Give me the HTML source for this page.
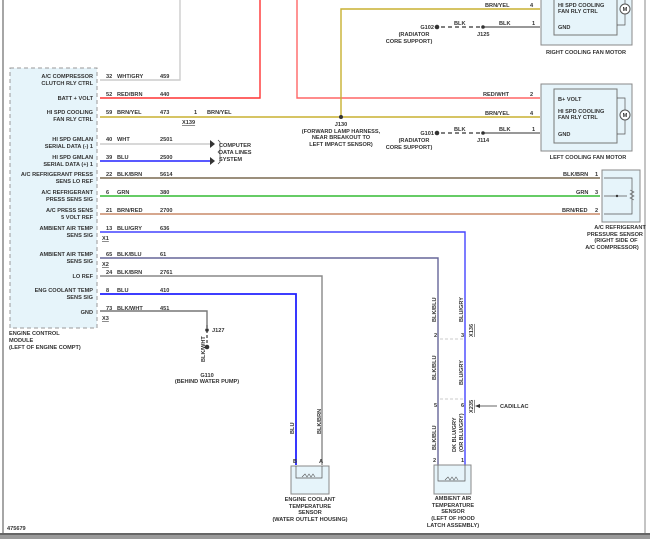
<!DOCTYPE html>
<html><head><meta charset="utf-8"><style>
html,body{margin:0;padding:0;background:#fff;width:650px;height:539px;overflow:hidden}
svg{display:block}
text{font-family:"Liberation Sans",sans-serif;font-size:5.6px;font-weight:bold;fill:#333}
.r{text-anchor:end}.m{text-anchor:middle}
</style></head><body>
<svg width="650" height="539" viewBox="0 0 650 539">
<rect x="0" y="0" width="650" height="539" fill="#fff"/>
<line x1="3" y1="0" x2="3" y2="533" stroke="#888" stroke-width="1.5"/>
<line x1="645" y1="0" x2="645" y2="533" stroke="#888" stroke-width="1"/>
<rect x="0" y="533" width="650" height="6" fill="#9a9a9a"/>
<rect x="0" y="533" width="650" height="2" fill="#666"/>
<!-- ECM -->
<rect x="10" y="68" width="87" height="260" fill="#e6f4fa" stroke="#999" stroke-dasharray="4,3"/>
<g fill="#333">
<text x="93" y="78" class="r">A/C COMPRESSOR</text><text x="93" y="85" class="r">CLUTCH RLY CTRL</text>
<text x="93" y="100" class="r">BATT + VOLT</text>
<text x="93" y="114" class="r">HI SPD COOLING</text><text x="93" y="121" class="r">FAN RLY CTRL</text>
<text x="93" y="141" class="r">HI SPD GMLAN</text><text x="93" y="148" class="r">SERIAL DATA (-) 1</text>
<text x="93" y="159" class="r">HI SPD GMLAN</text><text x="93" y="166" class="r">SERIAL DATA (+) 1</text>
<text x="93" y="176" class="r">A/C REFRIGERANT PRESS</text><text x="93" y="183" class="r">SENS LO REF</text>
<text x="93" y="194" class="r">A/C REFRIGERANT</text><text x="93" y="201" class="r">PRESS SENS SIG</text>
<text x="93" y="212" class="r">A/C PRESS SENS</text><text x="93" y="219" class="r">5 VOLT REF</text>
<text x="93" y="230" class="r">AMBIENT AIR TEMP</text><text x="93" y="237" class="r">SENS SIG</text>
<text x="93" y="256" class="r">AMBIENT AIR TEMP</text><text x="93" y="263" class="r">SENS SIG</text>
<text x="93" y="278" class="r">LO REF</text>
<text x="93" y="292" class="r">ENG COOLANT TEMP</text><text x="93" y="299" class="r">SENS SIG</text>
<text x="93" y="314" class="r">GND</text>
<text x="9" y="335">ENGINE CONTROL</text><text x="9" y="342">MODULE</text><text x="9" y="349">(LEFT OF ENGINE COMPT)</text>
<text x="7" y="530">475679</text>
</g>
<!-- wires -->
<g fill="none" stroke-width="1.4">
<path d="M100 80H180V0" stroke="#ccc"/>
<path d="M100 98H260V0" stroke="#f33"/>
<path d="M297 0V98H540" stroke="#f66"/>
<path d="M100 117H540M341 117V9H540" stroke="#c8b030"/>
<path d="M100 144H210" stroke="#ccc"/>
<path d="M100 161H210" stroke="#22f"/>
<path d="M100 178H600" stroke="#7a6a50"/>
<path d="M100 196H600" stroke="#3b3"/>
<path d="M100 214H600" stroke="#c88a68"/>
<path d="M100 232H465V465" stroke="#44f"/>
<path d="M100 258H438V465" stroke="#669"/>
<path d="M100 276H322V465" stroke="#888"/>
<path d="M100 294H296V465" stroke="#22f" stroke-width="1.8"/>
<path d="M100 311H207V325" stroke="#777"/>
<path d="M207 325V346" stroke="#555" stroke-dasharray="3,2"/>
<path d="M483 27H540M483 133H540" stroke="#777"/>
<path d="M441 27H483M441 133H483" stroke="#555" stroke-dasharray="4,3"/>
</g>
<path d="M440 339H463M440 399H463" fill="none" stroke="#bbb" stroke-width="0.8" stroke-dasharray="3,2"/>
<g fill="#333">
<circle cx="341" cy="117" r="2"/><circle cx="483" cy="27" r="1.8"/><circle cx="483" cy="133" r="1.8"/>
<circle cx="207" cy="330" r="1.8"/><circle cx="207" cy="347" r="2.3"/>
<circle cx="437" cy="27" r="2.3"/><circle cx="437" cy="133" r="2.3"/>
<polygon points="210,140 215,144 210,148"/><polygon points="210,157 215,161 210,165"/>
<polygon points="475,406 480,404 480,408"/>
</g>
<line x1="480" y1="406" x2="497" y2="406" stroke="#333" stroke-width="0.8"/>
<path d="M218 140l2 2v8l-2 2 2 2v8l-2 2" fill="none" stroke="#333" stroke-width="0.6"/>
<!-- wire labels -->
<g>
<text x="106" y="78">32</text><text x="117" y="78">WHT/GRY</text><text x="160" y="78">459</text>
<text x="106" y="96">52</text><text x="117" y="96">RED/BRN</text><text x="160" y="96">440</text>
<text x="106" y="114">59</text><text x="117" y="114">BRN/YEL</text><text x="160" y="114">473</text>
<text x="194" y="114">1</text><text x="207" y="114">BRN/YEL</text><text x="182" y="124" text-decoration="underline">X139</text>
<text x="106" y="141">40</text><text x="117" y="141">WHT</text><text x="160" y="141">2501</text>
<text x="106" y="159">39</text><text x="117" y="159">BLU</text><text x="160" y="159">2500</text>
<text x="219" y="147">COMPUTER</text><text x="219" y="154">DATA LINES</text><text x="219" y="161">SYSTEM</text>
<text x="106" y="176">22</text><text x="117" y="176">BLK/BRN</text><text x="160" y="176">5614</text>
<text x="106" y="194">6</text><text x="117" y="194">GRN</text><text x="160" y="194">380</text>
<text x="106" y="212">21</text><text x="117" y="212">BRN/RED</text><text x="160" y="212">2700</text>
<text x="106" y="230">13</text><text x="117" y="230">BLU/GRY</text><text x="160" y="230">636</text><text x="102" y="240" text-decoration="underline">X1</text>
<text x="106" y="256">65</text><text x="117" y="256">BLK/BLU</text><text x="160" y="256">61</text><text x="102" y="266" text-decoration="underline">X2</text>
<text x="106" y="274">24</text><text x="117" y="274">BLK/BRN</text><text x="160" y="274">2761</text>
<text x="106" y="292">8</text><text x="117" y="292">BLU</text><text x="160" y="292">410</text>
<text x="106" y="310">73</text><text x="117" y="310">BLK/WHT</text><text x="160" y="310">451</text><text x="102" y="320" text-decoration="underline">X3</text>
<text x="212" y="332">J127</text>
<text x="207" y="377" class="m">G110</text><text x="207" y="383" class="m">(BEHIND WATER PUMP)</text>
<text x="341" y="126" class="m">J130</text><text x="341" y="133" class="m">(FORWARD LAMP HARNESS,</text><text x="341" y="139" class="m">NEAR BREAKOUT TO</text><text x="341" y="146" class="m">LEFT IMPACT SENSOR)</text>
<text x="485" y="7">BRN/YEL</text><text x="530" y="7">4</text>
<text x="434" y="29" class="r">G102</text><text x="414" y="36" class="m">(RADIATOR</text><text x="409" y="43" class="m">CORE SUPPORT)</text>
<text x="454" y="25">BLK</text><text x="499" y="25">BLK</text><text x="532" y="25">1</text><text x="477" y="36">J125</text>
<text x="483" y="96">RED/WHT</text><text x="530" y="96">2</text>
<text x="485" y="115">BRN/YEL</text><text x="530" y="115">4</text>
<text x="434" y="135" class="r">G101</text><text x="414" y="142" class="m">(RADIATOR</text><text x="409" y="149" class="m">CORE SUPPORT)</text>
<text x="454" y="131">BLK</text><text x="499" y="131">BLK</text><text x="532" y="131">1</text><text x="477" y="142">J114</text>
<text x="563" y="176">BLK/BRN</text><text x="595" y="176">1</text>
<text x="576" y="194">GRN</text><text x="595" y="194">3</text>
<text x="562" y="212">BRN/RED</text><text x="595" y="212">2</text>
<text x="620" y="229" class="m">A/C REFRIGERANT</text><text x="615" y="236" class="m">PRESSURE SENSOR</text><text x="616" y="242" class="m">(RIGHT SIDE OF</text><text x="612" y="249" class="m">A/C COMPRESSOR)</text>
<text x="500" y="408">CADILLAC</text>
</g>
<!-- vertical labels -->
<g>
<text transform="translate(436,322) rotate(-90)">BLK/BLU</text>
<text transform="translate(463,322) rotate(-90)">BLU/GRY</text>
<text transform="translate(473,337) rotate(-90)" text-decoration="underline">X136</text>
<text transform="translate(436,380) rotate(-90)">BLK/BLU</text>
<text transform="translate(463,385) rotate(-90)">BLU/GRY</text>
<text transform="translate(473,413) rotate(-90)" text-decoration="underline">X235</text>
<text transform="translate(436,450) rotate(-90)">BLK/BLU</text>
<text transform="translate(456,452) rotate(-90)">DK BLU/GRY</text>
<text transform="translate(463,452) rotate(-90)">(OR BLU/GRY)</text>
<text transform="translate(294,434) rotate(-90)">BLU</text>
<text transform="translate(321,434) rotate(-90)">BLK/BRN</text>
<text transform="translate(205,362) rotate(-90)">BLK/WHT</text>
</g>
<!-- fan motors -->
<rect x="541" y="-2" width="91" height="47" fill="#e6f4fa" stroke="#888"/>
<rect x="554" y="-2" width="63" height="37" fill="#e6f4fa" stroke="#777"/>
<text x="558" y="7">HI SPD COOLING</text><text x="558" y="13">FAN RLY CTRL</text><text x="558" y="29">GND</text>
<circle cx="625" cy="9" r="5" fill="#fff" stroke="#555"/><text x="625" y="11" class="m">M</text>
<path d="M617 25H625V14M625 4V0" fill="none" stroke="#555" stroke-width="0.7"/>
<text x="586" y="54" class="m">RIGHT COOLING FAN MOTOR</text>
<rect x="541" y="84" width="91" height="67" fill="#e6f4fa" stroke="#888"/>
<rect x="554" y="89" width="63" height="54" fill="#e6f4fa" stroke="#777"/>
<text x="558" y="101">B+ VOLT</text><text x="558" y="113">HI SPD COOLING</text><text x="558" y="119">FAN RLY CTRL</text><text x="558" y="136">GND</text>
<circle cx="625" cy="115" r="5" fill="#fff" stroke="#555"/><text x="625" y="117" class="m">M</text>
<path d="M617 98H625V110M625 120V134H617" fill="none" stroke="#555" stroke-width="0.7"/>
<text x="588" y="159" class="m">LEFT COOLING FAN MOTOR</text>
<!-- pressure sensor -->
<rect x="602" y="170" width="38" height="52" fill="#e6f4fa" stroke="#888"/>
<path d="M604 178H632V214H604M604 196H627" fill="none" stroke="#555" stroke-width="0.7"/>
<circle cx="617" cy="196" r="1.2" fill="#333"/>
<path d="M630 190l4 2-4 2 4 2-4 2 4 2" fill="none" stroke="#555" stroke-width="0.6"/>
<!-- coolant sensor -->
<rect x="291" y="466" width="38" height="28" fill="#e6f4fa" stroke="#888"/>
<path d="M296 466V478H322V466" fill="none" stroke="#555" stroke-width="0.7"/>
<path d="M302 477l3-3 2 3 2-3 2 3 2-3 2 3" fill="none" stroke="#555" stroke-width="0.6"/>
<text x="293" y="463">B</text><text x="319" y="463">A</text>
<text x="310" y="501" class="m">ENGINE COOLANT</text><text x="310" y="508" class="m">TEMPERATURE</text><text x="310" y="514" class="m">SENSOR</text><text x="310" y="521" class="m">(WATER OUTLET HOUSING)</text>
<!-- ambient sensor -->
<rect x="434" y="465" width="37" height="29" fill="#e6f4fa" stroke="#888"/>
<path d="M438 465V481H465V465" fill="none" stroke="#555" stroke-width="0.7"/>
<path d="M445 480l3-3 2 3 2-3 2 3 2-3 2 3" fill="none" stroke="#555" stroke-width="0.6"/>
<text x="433" y="462">2</text><text x="461" y="462">1</text>
<text x="434" y="337">2</text><text x="461" y="337">3</text><text x="434" y="407">5</text><text x="461" y="407">6</text>
<text x="453" y="500" class="m">AMBIENT AIR</text><text x="453" y="507" class="m">TEMPERATURE</text><text x="453" y="513" class="m">SENSOR</text><text x="453" y="520" class="m">(LEFT OF HOOD</text><text x="453" y="527" class="m">LATCH ASSEMBLY)</text>
</svg>
</body></html>
